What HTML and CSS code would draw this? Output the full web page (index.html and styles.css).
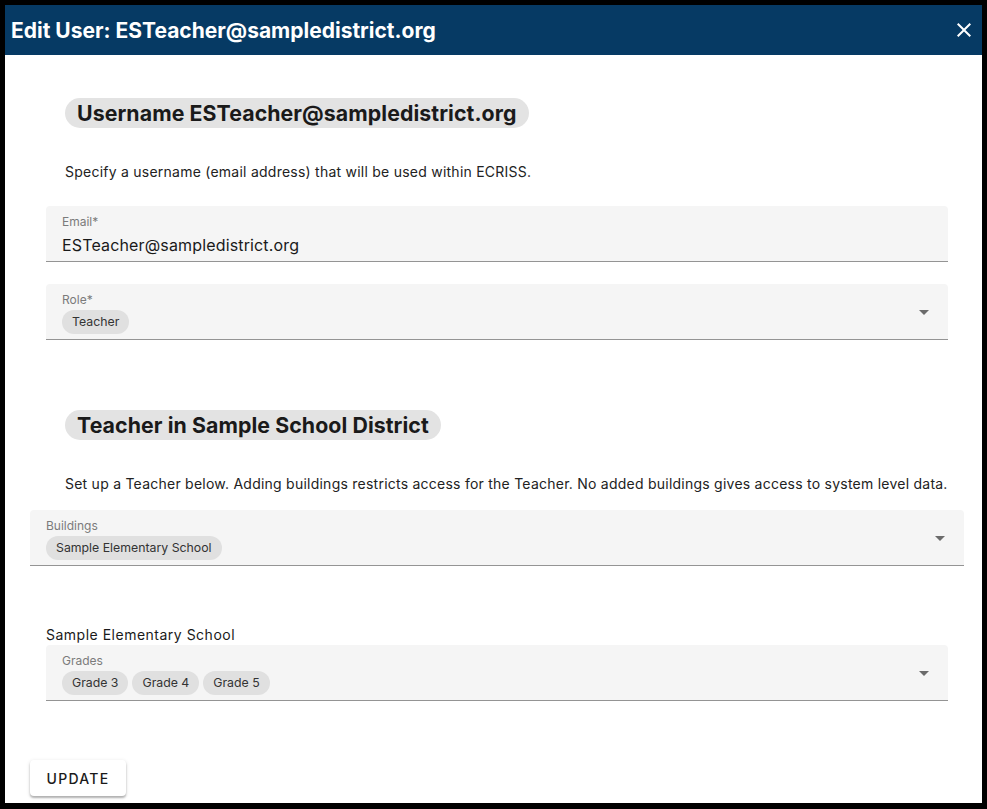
FILE: index.html
```html
<!DOCTYPE html>
<html>
<head>
    <title>Edit User</title>
    <link rel="stylesheet" href="styles.css">
</head>
<body>
    <div class="dialog">
        <div class="dialog-header">
            <h1>Edit User: ESTeacher@sampledistrict.org</h1>
            <svg class="close" viewBox="0 0 24 24" width="24" height="24"><path d="M19 6.41 17.59 5 12 10.59 6.41 5 5 6.41 10.59 12 5 17.59 6.41 19 12 13.41 17.59 19 19 17.59 13.41 12z" fill="#fff"/></svg>
        </div>
        <div class="dialog-body">
            <h2 class="section-title first">Username ESTeacher@sampledistrict.org</h2>
            <p class="hint">Specify a username (email address) that will be used within ECRISS.</p>

            <div class="field">
                <span class="field-label">Email*</span>
                <span class="field-value">ESTeacher@sampledistrict.org</span>
            </div>

            <div class="field select gap">
                <span class="field-label">Role*</span>
                <div class="chips"><span class="chip">Teacher</span></div>
                <svg class="arrow" viewBox="0 0 24 24" width="24" height="24"><path d="M7 10l5 5 5-5z"/></svg>
            </div>

            <h2 class="section-title second">Teacher in Sample School District</h2>
            <p class="hint">Set up a Teacher below. Adding buildings restricts access for the Teacher. No added buildings gives access to system level data.</p>

            <div class="field select wide">
                <span class="field-label">Buildings</span>
                <div class="chips"><span class="chip">Sample Elementary School</span></div>
                <svg class="arrow" viewBox="0 0 24 24" width="24" height="24"><path d="M7 10l5 5 5-5z"/></svg>
            </div>

            <div class="building-name">Sample Elementary School</div>
            <div class="field select">
                <span class="field-label">Grades</span>
                <div class="chips">
                    <span class="chip">Grade 3</span>
                    <span class="chip">Grade 4</span>
                    <span class="chip">Grade 5</span>
                </div>
                <svg class="arrow" viewBox="0 0 24 24" width="24" height="24"><path d="M7 10l5 5 5-5z"/></svg>
            </div>

            <button class="update">Update</button>
        </div>
    </div>
</body>
</html>
```

FILE: styles.css
```css
html, body { margin: 0; padding: 0; }
body { background: #000; padding: 5px; font-family: Inter, "Noto Sans", sans-serif; color: #1c1c1c; }
.dialog { background: #fff; width: 977px; height: 798px; }
.dialog-header { height: 50px; background: #063a64; display: flex; align-items: center; justify-content: space-between; padding: 0 6px 0 6px; box-sizing: border-box; }
.dialog-header h1 { margin: 0; color: #fff; font-size: 21px; font-weight: 700; letter-spacing: 0; }
.close { width: 24px; height: 24px; }
.dialog-body { padding: 0 0 0 25px; }
.section-title { display: inline-block; margin: 0 0 0 35px; height: 30px; line-height: 30px; padding: 0 12px 0 12px; border-radius: 15px; background: #e3e3e3; font-size: 21.3px; font-weight: 700; color: #1a1a1a; letter-spacing: 0.08px; }
.section-title.first { margin-top: 43px; }
.section-title.second { margin-top: 70px; }
.hint { margin: 34px 0 0 35px; font-size: 14px; line-height: 20px; color: #222; letter-spacing: 0.24px; }
.field { position: relative; margin: 24px 0 0 16px; width: 902px; height: 56px; box-sizing: border-box; background: #f5f5f5; border-bottom: 1px solid #949494; border-radius: 4px 4px 0 0; padding: 8px 16px 0 16px; }
.field.gap { margin-top: 22px; }
.field.wide { margin: 16px 0 0 0; width: 934px; }
.field-label { display: block; font-size: 12px; line-height: 14px; color: #7b7b7b; margin-top: 1px; }
.field-value { display: block; margin-top: 6px; font-size: 16px; line-height: 20px; color: #1a1a1a; letter-spacing: 0.15px; }
.chips { display: flex; gap: 4px; margin-top: 3px; }
.chip { display: inline-block; height: 24px; line-height: 24px; padding: 0 10px; border-radius: 12px; background: #e0e0e0; font-size: 12.3px; color: #333; }
.arrow { position: absolute; right: 12px; top: 16px; fill: #6b6b6b; }
.building-name { margin: 60px 0 0 16px; font-size: 14px; line-height: 18px; letter-spacing: 0.5px; color: #1a1a1a; }
.field.select + .building-name + .field { margin-top: 1px; }
.update { margin-top: 59px; width: 96px; height: 36px; background: #fff; border: none; border-radius: 4px; box-shadow: 0 2px 2px rgba(0,0,0,0.25), 0 1px 4px rgba(0,0,0,0.12); font-family: Inter, sans-serif; font-size: 14px; font-weight: 500; letter-spacing: 1.3px; text-transform: uppercase; color: #1a1a1a; cursor: pointer; }
```
